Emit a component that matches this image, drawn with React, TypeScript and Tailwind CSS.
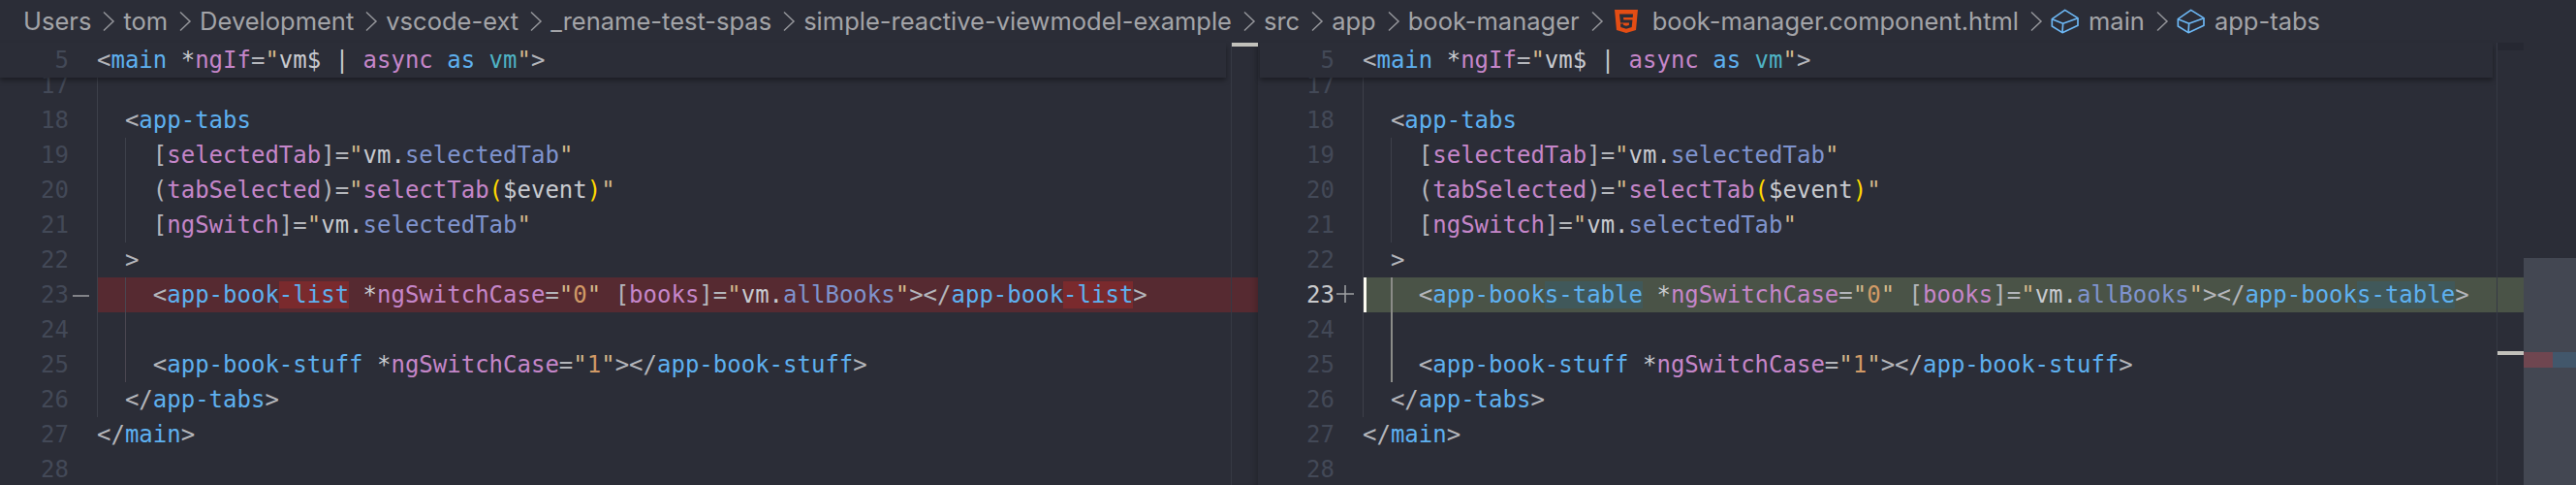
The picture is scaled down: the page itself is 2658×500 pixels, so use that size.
type Token = [string, string]

const tag = 'text-[#5eb0ef]'
const punct = 'text-[#b4b6bb]'
const attr = 'text-[#c586c9]'
const str = 'text-[#d3b98c]'
const plain = 'text-[#c8cacf]'
const prop = 'text-[#7f93cd]'
const num = 'text-[#d19a66]'
const teal = 'text-[#4fb3c4]'
const gold = 'text-[#ffd700]'

const stickyLine: Token[] = [
  ['<', punct], ['main', tag], [' *', plain], ['ngIf', attr], ['=', punct], ['"', str], ['vm$ | ', plain],
  ['async', attr], [' as', tag], [' vm', teal], ['"', str], ['>', punct],
]

const codeLines: Record<number, Token[]> = {
  18: [['  <', punct], ['app-tabs', tag]],
  19: [['    [', punct], ['selectedTab', attr], [']=', punct], ['"', str], ['vm.', plain], ['selectedTab', prop], ['"', str]],
  20: [['    (', punct], ['tabSelected', attr], [')=', punct], ['"', str], ['selectTab', attr], ['(', gold], ['$event', plain], [')', gold], ['"', str]],
  21: [['    [', punct], ['ngSwitch', attr], [']=', punct], ['"', str], ['vm.', plain], ['selectedTab', prop], ['"', str]],
  22: [['  >', punct]],
  25: [['    <', punct], ['app-book-stuff', tag], [' *', plain], ['ngSwitchCase', attr], ['=', punct], ['"', str], ['1', num], ['"', str], ['></', punct], ['app-book-stuff', tag], ['>', punct]],
  26: [['  </', punct], ['app-tabs', tag], ['>', punct]],
  27: [['</', punct], ['main', tag], ['>', punct]],
}

const changedRest: Token[] = [[' *', plain], ['ngSwitchCase', attr], ['=', punct], ['"', str], ['0', num], ['"', str], [' [', punct], ['books', attr], [']=', punct], ['"', str], ['vm.', plain], ['allBooks', prop], ['"', str], ['></', punct]]

function Tokens({ tokens }: { tokens: Token[] }) {
  return (
    <>
      {tokens.map(([text, color], i) => (
        <span key={i} className={color}>{text}</span>
      ))}
    </>
  )
}

function ChangedLine({ before, hl, hlClass }: { before: string; hl: string; hlClass: string }) {
  return (
    <>
      <span className={punct}>{'    <'}</span>
      <span className={tag}>{before}</span>
      <span className={`${tag} ${hlClass}`}>{hl}</span>
      <Tokens tokens={changedRest} />
      <span className={tag}>{before}</span>
      <span className={`${tag} ${hlClass}`}>{hl}</span>
      <span className={punct}>{'>'}</span>
    </>
  )
}

function Chevron() {
  return (
    <svg width="33" height="24" viewBox="0 0 33 24" fill="none" className="shrink-0 text-[#94959a]">
      <path d="M13 2.500l10 9.500-10 9.500" stroke="currentColor" strokeWidth="1.500" />
    </svg>
  )
}

function CubeIcon() {
  return (
    <svg width="30" height="26" viewBox="84 27 90 76" fill="none" stroke="#6db8f5" strokeWidth="5" strokeLinejoin="round">
      <path d="M88 58L128 30L168 55V78L120 100L88 80Z" />
      <path d="M88 58L122 72L168 55M122 72L120 100" />
    </svg>
  )
}

function Html5Icon() {
  return (
    <svg width="24" height="24" viewBox="0 0 24 24">
      <path d="M0 0H24L22 21L12 24L2 21Z" fill="#e44d14" />
      <path d="M5 4.500H19L18.700 8H9L9.300 10.500H18.400L17.700 18L12 19.800L6.300 18L6 14.500H9L9.200 16L12 16.800L14.800 16L15.100 13.500H6Z" fill="#2b2d37" />
    </svg>
  )
}

function Breadcrumbs() {
  const head = ['Users', 'tom', 'Development', 'vscode-ext', '_rename-test-spas', 'simple-reactive-viewmodel-example', 'src', 'app', 'book-manager']
  return (
    <div className="h-[44px] flex items-center pl-[24px] text-[25.5px] text-[#a3a4a8] whitespace-nowrap font-['Inter',sans-serif]">
      {head.map((name) => (
        <div key={name} className="flex items-center">
          <span>{name}</span>
          <Chevron />
        </div>
      ))}
      <span className="ml-[3px] mr-[15px] flex"><Html5Icon /></span>
      <span>book-manager.component.html</span>
      <Chevron />
      <span className="mr-[9px] flex"><CubeIcon /></span>
      <span>main</span>
      <Chevron />
      <span className="mr-[9px] flex"><CubeIcon /></span>
      <span>app-tabs</span>
    </div>
  )
}

function Guides({ active }: { active?: boolean }) {
  return (
    <>
      <div className="absolute left-0 top-[10px] h-[350px] w-px bg-[#3d404a]" />
      <div className="absolute left-[29px] top-[72px] h-[108px] w-px bg-[#3d404a]" />
      <div className={active ? 'absolute left-[29px] top-[216px] h-[108px] w-[2px] bg-[#8b8c88]' : 'absolute left-[29px] top-[216px] h-[108px] w-px bg-[#4a4650]'} />
    </>
  )
}

function Row({ n, gutter, numClass, sign, rowClass, children }: {
  n: number
  gutter: string
  numClass?: string
  sign?: React.ReactNode
  rowClass?: string
  children?: React.ReactNode
}) {
  return (
    <div className="flex h-[36px] shrink-0">
      <div className={`${gutter} shrink-0 flex relative`}>
        <span className={`w-[71px] ml-auto text-right ${numClass ?? 'text-[#434957]'}`}>{n}</span>
        <span className="w-[29px] flex items-center justify-center">{sign}</span>
      </div>
      <div className={`flex-1 min-w-0 whitespace-pre ${rowClass ?? ''}`}>{children}</div>
    </div>
  )
}

function Pane({ side }: { side: 'left' | 'right' }) {
  const isLeft = side === 'left'
  const gutter = isLeft ? 'w-[100px]' : 'w-[108px]'
  const rows = [17, 18, 19, 20, 21, 22, 23, 24, 25, 26, 27, 28]
  return (
    <div className={isLeft ? 'w-[1298px] shrink-0 flex flex-col relative' : 'flex-1 min-w-0 flex flex-col relative'}>
      {/* sticky scroll header */}
      <div className={isLeft
        ? 'relative z-10 flex h-[36px] shrink-0 mr-[33px] bg-[#2b2d37] shadow-[0_3px_5px_rgba(0,0,0,0.35)]'
        : 'relative z-10 flex h-[36px] shrink-0 mr-[86px] ml-[2px] bg-[#2b2d37] shadow-[0_3px_5px_rgba(0,0,0,0.35)]'}>
        <div className={isLeft ? 'w-[100px] shrink-0 flex' : 'w-[106px] shrink-0 flex'}>
          <span className="w-[71px] ml-auto text-right text-[#434957]">5</span>
          <span className="w-[29px]" />
        </div>
        <div className="whitespace-pre"><Tokens tokens={stickyLine} /></div>
      </div>
      <div className="flex-1 min-h-0 overflow-hidden relative">
        <div className="-mt-[10px] flex flex-col relative">
          {rows.map((n) => {
            if (n === 23) {
              return isLeft ? (
                <Row
                  key={n}
                  n={n}
                  gutter={gutter}
                  sign={
                    <svg width="29" height="36" viewBox="0 0 29 36"><path d="M4 19H21" stroke="#a0a1a4" strokeWidth="1.500" /></svg>
                  }
                  rowClass="bg-[#562a31]"
                >
                  <ChangedLine before="app-book" hl="-list" hlClass="bg-[#7a2a2d]" />
                </Row>
              ) : (
                <Row
                  key={n}
                  n={n}
                  gutter={gutter}
                  numClass="text-[#c9cacc]"
                  sign={
                    <svg width="29" height="36" viewBox="0 0 29 36"><path d="M2 17H20M11 8V26" stroke="#a0a1a4" strokeWidth="1.500" /></svg>
                  }
                  rowClass="bg-[#4a5347] border-l-[4px] border-[#fbf9f0] [text-indent:-4px]"
                >
                  <ChangedLine before="app-book" hl="s-table" hlClass="bg-[#40585a]" />
                </Row>
              )
            }
            return (
              <Row key={n} n={n} gutter={gutter}>
                {codeLines[n] && <Tokens tokens={codeLines[n]} />}
              </Row>
            )
          })}
          <div className={isLeft ? 'absolute left-[100px] top-0 pointer-events-none' : 'absolute left-[108px] top-0 pointer-events-none'}>
            <Guides active={!isLeft} />
          </div>
        </div>
      </div>
      {/* overview ruler, lies over the editor rows */}
      {isLeft ? (
        <div className="absolute z-20 right-0 top-0 bottom-0 w-[28px] border-l border-[#363944] shadow-[inset_-6px_0_6px_-4px_rgba(0,0,0,0.2)]">
          <div className="h-[4px] bg-[#c2c1bb]" />
        </div>
      ) : (
        <>
          <div className="absolute z-20 right-[54px] top-0 bottom-0 w-[28px] border-l border-[#363944]">
            <div className="h-[8px] bg-[#262832]" />
            <div className="absolute left-0 right-0 top-[318px] h-[4px] bg-[#c2c1bb]" />
          </div>
          <div className="absolute z-20 right-0 top-0 bottom-0 w-[54px] bg-[#2b2d37] flex flex-col">
            <div className="mt-[222px] flex-1 bg-[#434752]">
              <div className="mt-[97px] flex h-[16px]">
                <div className="w-[30px] bg-[#6f4650]" />
                <div className="flex-1 bg-[#42576b]" />
              </div>
            </div>
          </div>
        </>
      )}
    </div>
  )
}

export default function App() {
  return (
    <div className="w-[2658px] h-[500px] overflow-hidden flex flex-col bg-[#2b2d37]">
      <Breadcrumbs />
      <div className="flex-1 min-h-0 flex text-[24px] leading-[36px] font-['DejaVu_Sans_Mono','Liberation_Mono',monospace] [font-variant-ligatures:none]">
        <Pane side="left" />
        <Pane side="right" />
      </div>
    </div>
  )
}
